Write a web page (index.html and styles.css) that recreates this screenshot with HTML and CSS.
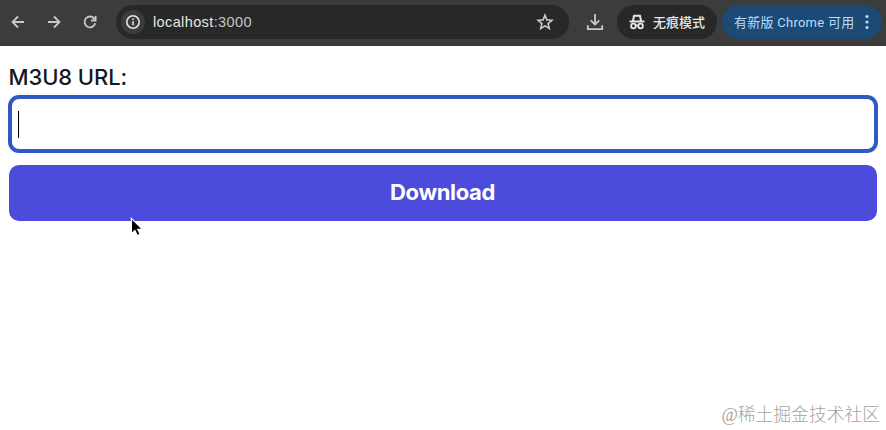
FILE: index.html
```html
<!DOCTYPE html>
<html lang="zh-CN">
<head>
  <meta charset="UTF-8">
  <meta name="viewport" content="width=device-width, initial-scale=1.0">
  <title>M3U8 Download</title>
  <link rel="stylesheet" href="styles.css">
</head>
<body>
  <header class="toolbar">
    <nav class="nav">
      <svg width="18" height="18" viewBox="0 0 18 18"><path d="M15 9H3.5M9 3.5L3.5 9L9 14.5"/></svg>
      <svg width="18" height="18" viewBox="0 0 18 18"><path d="M3 9h11.5M9 3.5L14.5 9L9 14.5"/></svg>
      <svg width="18" height="18" viewBox="0 0 18 18"><path d="M14.2 10.3A5.4 5.4 0 1 1 13.1 5.4L14.6 7M14.6 3v4.5H10"/></svg>
    </nav>
    <div class="address">
      <span class="site-info">
        <svg width="16" height="16" viewBox="0 0 16 16"><circle cx="8" cy="8" r="6.2"/><path d="M8 7.3v4M8 4.5v1.6"/></svg>
      </span>
      <span class="url">localhost<span class="port">:3000</span></span>
      <svg class="star" width="18" height="18" viewBox="0 0 18 18"><path d="M9 2.2l1.9 4.7 5 .4-3.8 3.3 1.2 4.9L9 12.9l-4.3 2.6 1.2-4.9-3.8-3.3 5-.4z"/></svg>
    </div>
    <svg class="save" width="18" height="18" viewBox="0 0 18 18"><path d="M9 1v10.5M4.7 7.3L9 11.5l4.3-4.2M1.8 12.3v3.8h14.4v-3.8"/></svg>
    <div class="incognito">
      <svg width="16" height="16" viewBox="0 0 16 16"><path class="hat" d="M5 1.8L4 6.8M11 1.8l1 5M4.3 1.8h7.4M.6 7.5h14.8"/><circle cx="4.4" cy="12" r="2.3"/><circle cx="11.6" cy="12" r="2.3"/><path d="M6.6 11.7q1.4-.7 2.8 0"/></svg>
      <span>无痕模式</span>
    </div>
    <div class="update">
      <span>有新版 Chrome 可用</span>
      <svg width="4" height="16" viewBox="0 0 4 16"><circle cx="2" cy="2.5" r="1.6"/><circle cx="2" cy="8" r="1.6"/><circle cx="2" cy="13.5" r="1.6"/></svg>
    </div>
  </header>

  <main class="form">
    <label for="url">M3U8 URL:</label>
    <div class="field">
      <input type="text" id="url">
      <span class="caret"></span>
    </div>
    <button type="button">Download</button>
  </main>

  <svg class="pointer" width="18" height="24" viewBox="0 0 18 24"><path d="M3.4 2.4v15.2l3.5-3.2 2.3 5.2 2.9-1.3-2.3-5h4.7z"/></svg>
  <div class="watermark">@稀土掘金技术社区</div>
</body>
</html>
```
FILE: styles.css
```css
* {
  box-sizing: border-box;
}
body {
  margin: 0;
  height: 430px;
  overflow: hidden;
  position: relative;
  background: white;
  font-family: Inter, "Noto Sans CJK SC", sans-serif;
}
svg {
  display: block;
  flex: none;
  fill: none;
  stroke: #c9c9c9;
  stroke-width: 1.8;
}
.toolbar {
  display: flex;
  align-items: center;
  height: 46px;
  padding: 0 4px 2px 9px;
  background: #3c3c3c;
}
.nav {
  display: flex;
  gap: 18px;
}
.address {
  display: flex;
  align-items: center;
  width: 453px;
  height: 34px;
  margin-left: 17px;
  padding: 0 15px 0 5px;
  border-radius: 17px;
  background: #282828;
}
.site-info {
  display: flex;
  align-items: center;
  justify-content: center;
  width: 24px;
  height: 24px;
  border-radius: 50%;
  background: #3c3c3c;
}
.site-info svg {
  stroke: #e3e3e3;
  stroke-width: 1.6;
}
.url {
  margin-left: 8px;
  font-family: "Liberation Sans", sans-serif;
  font-size: 14.5px;
  letter-spacing: 0.38px;
  color: #e6e6e6;
}
.port {
  color: #c4c4c4;
}
.star {
  margin-left: auto;
  stroke-width: 1.6;
}
.save {
  margin-left: 17px;
}
.incognito, .update {
  display: flex;
  align-items: center;
  height: 34px;
  border-radius: 17px;
  font-family: Roboto, "Noto Sans CJK SC", sans-serif;
  font-size: 13px;
  font-weight: 500;
  white-space: nowrap;
}
.incognito span, .update span {
  padding-bottom: 2px;
}
.incognito {
  width: 100px;
  margin-left: 13px;
  padding-left: 12px;
  gap: 8px;
  background: #282828;
  color: #e6e6e6;
}
.incognito svg {
  stroke: #e6e6e6;
}
.incognito .hat {
  stroke-width: 2;
}
.update {
  width: 160px;
  margin-left: 5px;
  padding: 0 13px 0 12px;
  justify-content: space-between;
  background: #1c4a75;
  color: #b9dcfa;
  font-weight: 400;
  letter-spacing: 0.26px;
}
.update svg {
  fill: #b9dcfa;
  stroke: none;
}
.form {
  display: flex;
  flex-direction: column;
  padding: 14px 9.5px 0 8.5px;
}
label {
  height: 35px;
  line-height: 34px;
  font-size: 22px;
  font-weight: 500;
  letter-spacing: -0.1px;
  color: #15171f;
}
.field {
  position: relative;
  height: 58px;
  margin: 0 -1px;
}
input {
  display: block;
  width: 100%;
  height: 100%;
  padding: 0 8px;
  border: 4px solid #3059c5;
  border-radius: 11px;
  outline: none;
  background: white;
  font: inherit;
  font-size: 22px;
}
.caret {
  position: absolute;
  left: 10.5px;
  top: 16px;
  width: 1px;
  height: 27px;
  background: black;
}
button {
  height: 56px;
  margin-top: 12px;
  padding: 0 0 2px;
  border: none;
  border-radius: 10px;
  background: #4d4bdb;
  color: white;
  font-family: inherit;
  font-size: 22px;
  font-weight: 700;
  letter-spacing: -0.35px;
  cursor: pointer;
}
.pointer {
  position: absolute;
  left: 128px;
  top: 216px;
  fill: black;
  stroke: white;
  stroke-width: 1.2;
}
.watermark {
  position: absolute;
  right: 6px;
  bottom: 2px;
  font-family: "Liberation Serif", "Noto Sans CJK SC", serif;
  font-size: 17.8px;
  font-weight: 300;
  line-height: 26px;
  color: #a3a3a3;
}
```
